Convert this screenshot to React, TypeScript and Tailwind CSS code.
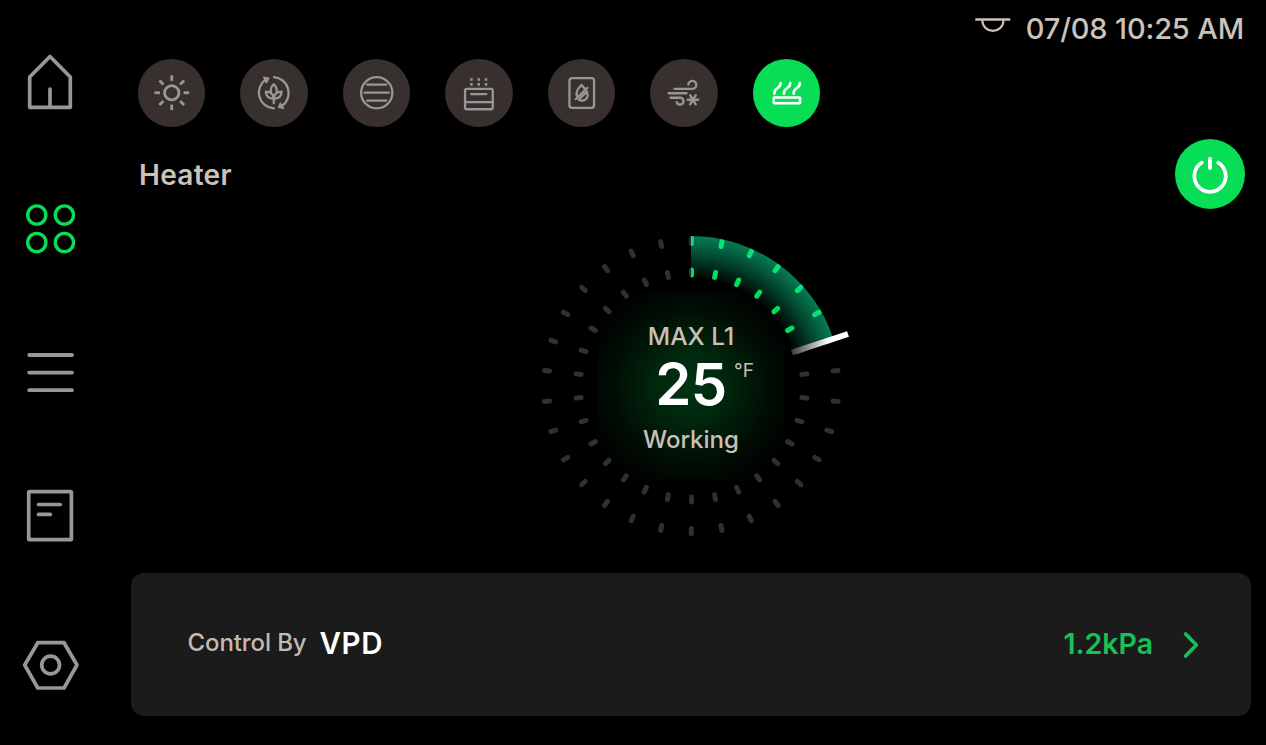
import type { ReactNode } from "react";

function NavIcon({ label, green, children }: { label: string; green?: boolean; children: ReactNode }) {
  return (
    <button aria-label={label} className={green ? "block text-[#07dd55]" : "block text-[#979797]"}>
      <svg width="60" height="60" viewBox="0 0 60 60" fill="none" stroke="currentColor" strokeWidth="3.7" strokeLinecap="round" strokeLinejoin="round" className="block">
        {children}
      </svg>
    </button>
  );
}

function Sidebar() {
  return (
    <nav className="flex w-[131px] shrink-0 flex-col items-start pt-[52px] pl-5">
      <NavIcon label="Home">
        <path d="M30 4.5 L50.3 25 V55.3 H9.7 V25 Z M30 37 V55" />
      </NavIcon>
      <div className="mt-[87px]">
        <NavIcon label="Devices" green>
          <g strokeWidth="3.4">
            <circle cx="16.8" cy="16" r="9.1" />
            <circle cx="44.4" cy="16" r="9.1" />
            <circle cx="16.8" cy="43.5" r="9.1" />
            <circle cx="44.4" cy="43.5" r="9.1" />
          </g>
        </NavIcon>
      </div>
      <div className="mt-[83px]">
        <NavIcon label="Menu">
          <path d="M9.2 13 H52 M9.2 30.6 H52 M9.2 48.2 H52" strokeWidth="3.8" />
        </NavIcon>
      </div>
      <div className="mt-[84px]">
        <NavIcon label="Log">
          <rect x="8.7" y="5.6" width="42.7" height="48.1" rx="1" />
          <path d="M18.5 18.5 H40.3 M18.5 28.4 H30.3" />
        </NavIcon>
      </div>
      <div className="mt-[89px]">
        <NavIcon label="Settings">
          <path d="M4.7 30 L17.8 7.7 H44 L57 30 L44 53 H17.8 Z" />
          <circle cx="30.6" cy="30" r="8.9" />
        </NavIcon>
      </div>
    </nav>
  );
}

const MODES: { name: string; icon: ReactNode }[] = [
  {
    name: "Light",
    icon: (
      <g strokeWidth="2.8" strokeLinecap="butt">
        <circle r="7.2" />
        {[0, 45, 90, 135, 180, 225, 270, 315].map((a) => (
          <path key={a} d="M0 -11.8 V-17.4" transform={`rotate(${a})`} />
        ))}
      </g>
    ),
  },
  {
    name: "Circulation",
    icon: (
      <>
        <path d="M0 15.7 A16 16 0 0 1 -8 -13.4 M0.3 -15.7 A16 16 0 0 1 8 13.4" />
        <path d="M-10 -15.6 L-4.9 -14.4 L-7.4 -10.2 Z M9.8 15.6 L4.9 14.6 L6.6 10.6 Z" fill="currentColor" strokeWidth="1.5" />
        <path d="M0 10.5 V5.8 C-5 6.3 -7.9 3 -7.9 -1 C-4 -1.2 -0.6 1 0 5.4 C0.6 1 4 -1.2 7.9 -1 C7.9 3 5 6.3 0 5.8 M-2.7 0.4 C-3.7 -3 -2.5 -6 0 -8.5 C2.5 -6 3.7 -3 2.7 0.4" />
      </>
    ),
  },
  {
    name: "Filter",
    icon: (
      <>
        <circle r="15.6" />
        <path d="M-9.6 -8.2 H9.6 M-12.2 -0.2 H12.2 M-9.6 7.8 H9.6" />
      </>
    ),
  },
  {
    name: "Humidifier",
    icon: (
      <>
        <rect x="-13.7" y="-3.9" width="27.7" height="20.4" rx="1.8" />
        <path d="M-13.7 9.3 H13.7 M-7.6 1.3 H7.6" />
        <path d="M-7.3 -14.6 V-12 M0 -14.6 V-12 M7.3 -14.6 V-12 M-7.3 -9.8 V-7 M0 -9.8 V-7 M7.3 -9.8 V-7" strokeWidth="2.5" strokeLinecap="butt" />
      </>
    ),
  },
  {
    name: "Dehumidifier",
    icon: (
      <>
        <rect x="-12.3" y="-14.6" width="24.6" height="29.7" rx="2.6" />
        <path d="M-4.8 3.2 C-6.8 -1.2 -3 -5 -0.2 -7.8 C0.7 -6.7 1.6 -5.6 2.6 -4.4 M5 -1 C7.8 5 2.5 9.7 -2.4 7.3 M-6 6.5 L5.5 -4.9 M-2.9 6.8 L5.4 -1.3" />
      </>
    ),
  },
  {
    name: "Cooler",
    icon: (
      <>
        <path d="M-9.3 -3.9 H8.2 A4 4 0 1 0 4.6 -8.2 M-15.2 0.5 H2.8 M-13.2 5 H-4.3 A3.4 3.4 0 1 1 -7 9.4" />
        <path d="M3.8 7 H14.6 M6.4 2.4 L12 11.6 M12 2.4 L6.4 11.6" />
      </>
    ),
  },
  {
    name: "Heater",
    icon: (
      <g strokeWidth="2.6">
        <rect x="-13" y="4.7" width="26.3" height="5.8" rx="0.5" />
        {[-12.5, -2.9, 6.8].map((x) => (
          <path key={x} d={`M${x} 1 C${x - 0.2} -6 ${x + 6.5} -3.5 ${x + 6.4} -9.8`} />
        ))}
      </g>
    ),
  },
];

function Modes() {
  return (
    <div className="flex gap-[35px] pl-[6.5px]">
      {MODES.map((m) => (
        <button
          key={m.name}
          aria-label={m.name}
          className={
            m.name === "Heater"
              ? "size-[67.5px] rounded-full bg-[#07dd55] text-white"
              : "size-[67.5px] rounded-full bg-[#37302e] text-[#979797]"
          }
        >
          <svg viewBox="-33.75 -33.75 67.5 67.5" className="block size-full" fill="none" stroke="currentColor" strokeWidth="2.3" strokeLinecap="round" strokeLinejoin="round">
            {m.icon}
          </svg>
        </button>
      ))}
    </div>
  );
}

const polar = (deg: number, r: number) => {
  const a = (deg * Math.PI) / 180;
  return `${(Math.sin(a) * r).toFixed(2)} ${(-Math.cos(a) * r).toFixed(2)}`;
};

function Ticks({ count, green }: { count: number; green?: boolean }) {
  return (
    <g strokeWidth="5" strokeLinecap="round">
      {Array.from({ length: count }, (_, i) => (
        <g key={i}>
          <path d="M0 -142.6 V-147.6" transform={`translate(0.3 0) rotate(${i * 12})`} stroke={green ? "#08e578" : "#303030"} />
          <path d="M0 -111 V-116" transform={`translate(0.5 0) rotate(${i * 12})`} stroke={green ? "#07dd5c" : "#303030"} />
        </g>
      ))}
    </g>
  );
}

function Dial() {
  const sector = `M${polar(0, 150)} A150 150 0 0 1 ${polar(71.5, 150)} L${polar(71.5, 107)} A107 107 0 0 0 ${polar(0, 107)} Z`;
  return (
    <div className="grid size-[340px] place-items-center">
      <svg viewBox="-170 -170 340 340" className="col-start-1 row-start-1 size-full" fill="none">
        <defs>
          <radialGradient id="glow" gradientUnits="userSpaceOnUse" cx="0" cy="0" r="112">
            <stop offset="0" stopColor="#003413" />
            <stop offset="0.35" stopColor="#00250d" />
            <stop offset="0.7" stopColor="#000d04" />
            <stop offset="1" stopColor="#000000" />
          </radialGradient>
          <radialGradient id="band" gradientUnits="userSpaceOnUse" cx="0" cy="0" r="150">
            <stop offset="0.71" stopColor="#000000" />
            <stop offset="0.8" stopColor="#01291b" />
            <stop offset="0.9" stopColor="#035538" />
            <stop offset="1" stopColor="#057c54" />
          </radialGradient>
          <linearGradient id="needle" gradientUnits="userSpaceOnUse" x1="101" y1="0" x2="157" y2="0">
            <stop offset="0" stopColor="#3d3d3d" />
            <stop offset="0.65" stopColor="#ffffff" />
          </linearGradient>
          <clipPath id="sector">
            <path d={sector} />
          </clipPath>
        </defs>
        <rect x="-93.5" y="-94" width="187.5" height="187.5" fill="url(#glow)" />
        <Ticks count={30} />
        <path d={sector} fill="url(#band)" />
        <g clipPath="url(#sector)">
          <Ticks count={6} green />
        </g>
        <path d="M101 -33.5 L157 -52" stroke="url(#needle)" strokeWidth="6" />
      </svg>
      <div className="relative col-start-1 row-start-1 flex flex-col items-center pt-[4px] text-[#c8c0b9]">
        <span className="text-[24.5px] leading-[30px] font-[450]">MAX L1</span>
        <span className="mt-[3px] text-[58px] leading-[60px] font-semibold tracking-[-0.5px] text-white">25</span>
        <span className="mt-[11px] text-[24px] leading-[30px] font-[450]">Working</span>
        <span className="absolute top-[44px] left-[91px] text-[19px] leading-[20px]">°F</span>
      </div>
    </div>
  );
}

export default function App() {
  return (
    <div className="flex h-[745px] w-[1266px] overflow-hidden bg-black font-['Inter','Liberation_Sans',sans-serif]">
      <Sidebar />
      <main className="flex w-[1120px] flex-col">
        <header className="flex h-[59.25px] items-start justify-end pr-[7px] text-[#cbc2b9]">
          <svg width="36" height="18" viewBox="0 0 36 18" className="mt-[16px] mr-[15px]" fill="none" stroke="currentColor" strokeWidth="2.5">
            <path d="M0.3 3.4 H35.3" />
            <path d="M7.4 4 C7.4 18.4 28.4 18.4 28.4 4" strokeWidth="2.2" />
          </svg>
          <time className="pt-[11px] text-[29px] leading-[36px] font-[450] tracking-[-0.14px]">07/08 10:25 AM</time>
        </header>
        <Modes />
        <div className="mt-[12.5px] flex h-[70px] items-center justify-between pr-[6px] pl-[8px]">
          <h1 className="mt-[2px] text-[28px] leading-[36px] font-semibold tracking-[0.3px] text-[#cbc2b9]">Heater</h1>
          <button aria-label="Power" className="size-[70px] rounded-full bg-[#07dd55] text-white">
            <svg viewBox="-35 -35 70 70" className="block size-full" fill="none" stroke="currentColor" strokeLinecap="round">
              <path d="M-8.2 -11.3 A15.7 15.7 0 1 0 8.2 -11.3" strokeWidth="3.8" />
              <path d="M0 -15.3 V-6" strokeWidth="4" />
            </svg>
          </button>
        </div>
        <div className="mt-[6.5px] flex h-[340px] justify-center">
          <Dial />
        </div>
        <section className="mt-[17.5px] flex h-[142.25px] items-center rounded-[13px] bg-[#1b1b1b] pr-[52px] pl-[56.5px]">
          <span className="mb-[3px] text-[24px] leading-[30px] font-[450] tracking-[-0.1px] text-[#c3bab1]">Control By</span>
          <span className="mb-[2px] ml-[13px] text-[29.5px] leading-[36px] font-semibold tracking-[0.6px] text-white">VPD</span>
          <span className="mb-[1px] ml-auto text-[28.5px] leading-[36px] font-semibold text-[#16c157]">1.2kPa</span>
          <svg width="17" height="28" viewBox="0 0 17 28" className="mt-[2px] ml-[29px] text-[#16c157]" fill="none" stroke="currentColor" strokeWidth="3.6" strokeLinecap="round" strokeLinejoin="round">
            <path d="M3.6 3 L14.4 14 L3.6 25" />
          </svg>
        </section>
      </main>
    </div>
  );
}
